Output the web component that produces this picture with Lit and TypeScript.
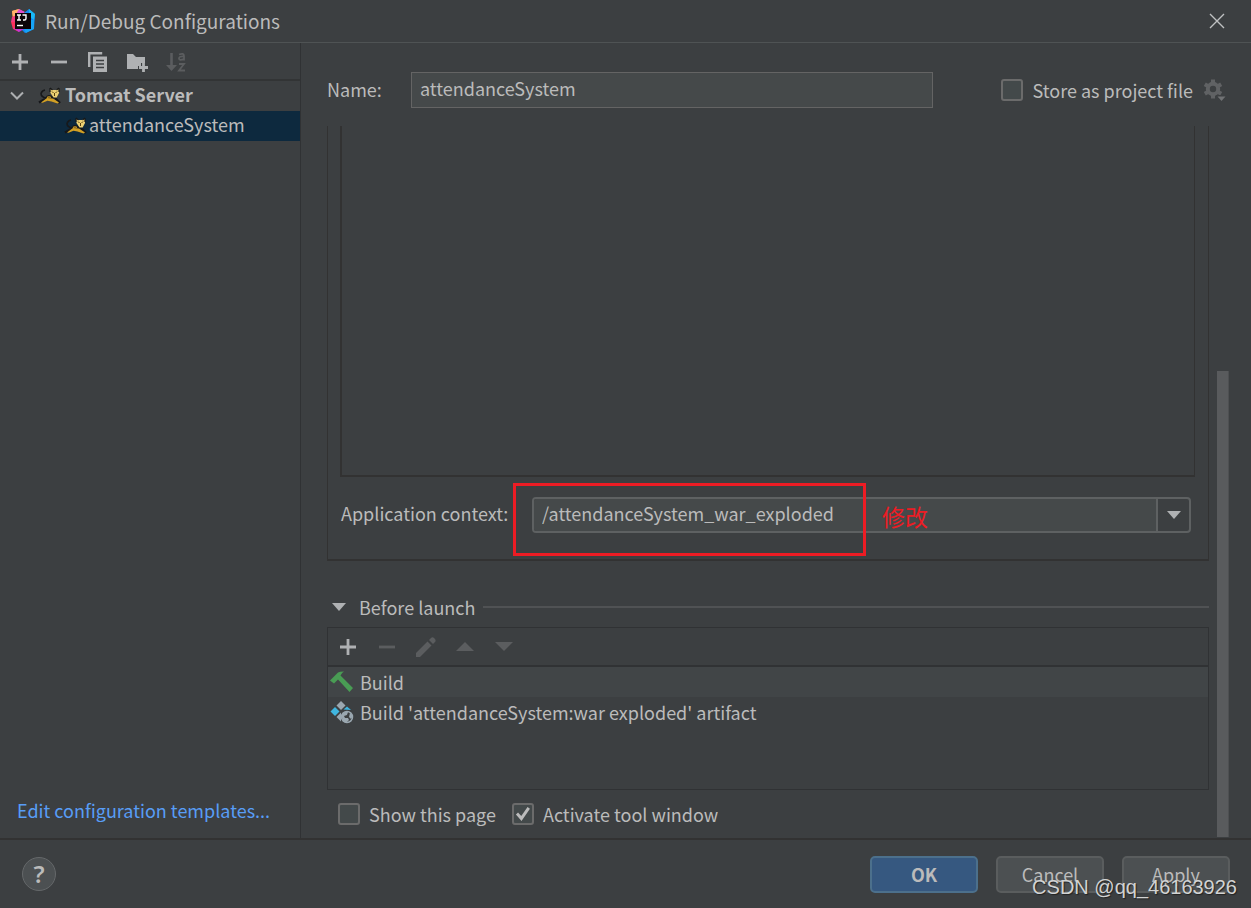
import { LitElement, html, css, svg } from "lit";
import { customElement, property, state } from "lit/decorators.js";
import { classMap } from "lit/directives/class-map.js";

const icons: Record<string, { w: number; h: number; body: unknown }> = {
  logo: {
    w: 26, h: 26,
    body: svg`
      <path d="M2 3 L9 1 L14 4 L9 15 L3 14 Z" fill="#fb8a3c"/>
      <path d="M1 14 L5 10 L9 24 L3 21 Z" fill="#fe315d"/>
      <path d="M2 3 L9 1 L8 6 L3 9 Z" fill="#ffb46b"/>
      <path d="M2 9 L7 7 L6 14 L1 14 Z" fill="#f23a7d"/>
      <path d="M9 1 L15 4 L12 7 L6 6 Z" fill="#e04fd0"/>
      <path d="M14 5 L19 1 L25 6 L24 21 L15 25 L11 21 Z" fill="#1288f5"/>
      <path d="M19 1 L25 6 L24 12 L19 8 Z" fill="#19b9f5"/>
      <path d="M21 12 L24 12 L24 21 L16 25 L14 21 Z" fill="#16a4f7"/>
      <path d="M3 20 L9 24 L14 21 Z" fill="#c436d8"/>
      <rect x="5" y="5" width="16" height="16" fill="#0b0508"/>
      <path d="M7 7h4M9 7v5M7 12h4M12.500 7h3.500v3.500q0 1.500-1.500 1.500h-1.500" fill="none" stroke="#fff" stroke-width="1.400"/>
      <path d="M7 17.500h6" stroke="#fff" stroke-width="1.400"/>`,
  },
  close: { w: 16, h: 16, body: svg`<path d="M1 1 15 15M15 1 1 15" stroke="#bfc1c2" stroke-width="1.4" fill="none"/>` },
  plus: { w: 16, h: 16, body: svg`<path d="M8 0v16M0 8h16" stroke="currentColor" stroke-width="2.800" fill="none"/>` },
  minus: { w: 16, h: 16, body: svg`<path d="M0 8h16" stroke="currentColor" stroke-width="2.800" fill="none"/>` },
  copy: {
    w: 20, h: 20,
    body: svg`<path d="M1.200 15V1.200h13" fill="none" stroke="#afb1b3" stroke-width="2.400"/>
      <path d="M5 4.500h14v15.500H5z" fill="#afb1b3"/>
      <path d="M8 8.500h8M8 12h8M8 15.500h8" stroke="#3c3f41" stroke-width="1.300"/>`,
  },
  folder: {
    w: 22, h: 20,
    body: svg`<path d="M1 2h6l3 3h9v6h-4v3h-3v3H1z" fill="#afb1b3"/>
      <path d="M17.500 11v9M13 15.500h9" stroke="#afb1b3" stroke-width="2.800"/>`,
  },
  sort: {
    w: 20, h: 20,
    body: svg`<path d="M5.500 1v13" stroke="#5b5d5f" stroke-width="2.600"/><path d="M0 13h11l-5.500 6z" fill="#5b5d5f"/>
      <path d="M13 2.500q5-2 5 1.500v4.500M18 4.500q-5-.5-5 2t5 .5" fill="none" stroke="#5b5d5f" stroke-width="1.800"/>
      <path d="M13 12h5l-5 6.500h6" fill="none" stroke="#5b5d5f" stroke-width="1.800"/>`,
  },
  chevron: { w: 14, h: 9, body: svg`<path d="M1 0.500 7 6.500 13 0.500" fill="none" stroke="#adafb1" stroke-width="2"/>` },
  tomcat: {
    w: 22, h: 16,
    body: svg`<path d="M7 10Q2 9 2 5.500Q3 2.500 6 2" fill="none" stroke="#17181a" stroke-width="1.600"/>
      <path d="M6 11 0 14.500M16 10l5 5" stroke="#17181a" stroke-width="2.400"/>
      <path d="M6 10Q8 6 12 7.500l4 2-3 2.500-6 1z" fill="#17181a"/>
      <path d="M2 14.500 8 10l6 .5 6 4-1.500 1-6-2-4-.8-5 2z" fill="#d3a024"/>
      <path d="M8 9.500q2-1.200 4 0" stroke="#d3a024" fill="none" stroke-width="1.400"/>
      <path d="M11 .500 13.500 2h3.500L20 .500V5l-2.300 4.500h-3.200L11.500 5z" fill="#ecd073"/>
      <path d="M11 0v4M20 0v4M11 0l2.500 2M20 0l-2.500 2" stroke="#17181a" stroke-width="1.200"/>
      <path d="M13 3.500l1.500 1.500M18 3.500l-1.500 1.500M15.500 5v3" stroke="#57410e" stroke-width="1"/>`,
  },
  gear: {
    w: 22, h: 22,
    body: svg`<circle cx="9" cy="10" r="5.200" fill="none" stroke="#606264" stroke-width="4"/>
      <path d="M9 .500v4M9 15.500v4M.8 5.300l3.400 2M13.800 12.800l3.400 2M.8 14.700l3.400-2M13.800 7.200l3.400-2" stroke="#606264" stroke-width="4"/>
      <path d="M12 16h10l-5 6z" fill="#3c3f41"/><path d="M13.500 17.500h8l-4 4.500z" fill="#707274"/>`,
  },
  down: { w: 14, h: 8, body: svg`<path d="M0 0h14l-7 8z" fill="#afb1b3"/>` },
  pencil: {
    w: 20, h: 20,
    body: svg`<path d="M0 16 11.500 4.500l4 4L4 20H0z" fill="currentColor"/><path d="M13 3l2-2q1.500-1.500 3.500.500t.500 3.500l-2 2z" fill="currentColor"/>`,
  },
  moveUp: { w: 18, h: 9, body: svg`<path d="M0 9h18L9 0z" fill="currentColor"/>` },
  moveDown: { w: 18, h: 9, body: svg`<path d="M0 0h18L9 9z" fill="currentColor"/>` },
  hammer: {
    w: 24, h: 22,
    body: svg`<path d="M0 9.500 8 1.500Q9.500 .500 14 .500q-2 1-3.500 4L23 17l-3.500 4L8 8.500 4 12.500z" fill="#499c54"/>`,
  },
  artifact: {
    w: 24, h: 24,
    body: svg`<path d="M11 1l4.500 4.500L11 10 6.500 5.500z" fill="#9aa7b0"/><path d="M5 7l4.500 4.500L5 16 .5 11.500z" fill="#40b6e0"/>
      <path d="M13.500 9.500 17 6.500l4 3.500z" fill="#40b6e0"/><path d="M11 12.500v9l-4.500-4.500z" fill="#9aa7b0"/>
      <circle cx="17" cy="17" r="5.500" fill="#3c3f41" stroke="#9aa7b0" stroke-width="1.500"/>
      <path d="M12 14q3-3 6-2l-1 3-3 1 1 2 3 0 1 2-3 3q-5-2-4-9z" fill="#9aa7b0"/>
      <path d="M20 13l3 3-2 3-2-2z" fill="#9aa7b0"/>`,
  },
};

@customElement("ui-icon")
export class UiIcon extends LitElement {
  static styles = css`
    :host { display: inline-flex; flex: none; }
    .glyph { display: block; overflow: visible; }
  `;
  @property() name = "plus";
  render() {
    const i = icons[this.name];
    return html`<svg class="glyph" width=${i.w} height=${i.h} viewBox="0 0 ${i.w} ${i.h}" aria-hidden="true">${i.body}</svg>`;
  }
}

@customElement("app-root")
export class AppRoot extends LitElement {
  static styles = css`
    :host {
      display: flex;
      flex-direction: column;
      min-height: 100vh;
      box-sizing: border-box;
      background: #3c3f41;
      color: #bbbbbb;
      font: 18px/30px "Noto Sans CJK SC", "Noto Sans", sans-serif;
      position: relative;
      overflow: hidden;
    }
    * { box-sizing: border-box; }
    button, input { font: inherit; color: inherit; margin: 0; }
    .plain {
      display: flex; align-items: center; justify-content: center;
      padding: 0; border: 0; background: none; color: #afb1b3;
    }
    .plain:disabled { color: #5b5d5f; }
    .titlebar {
      display: flex; align-items: center; gap: 9px;
      height: 43px; padding: 0 26px 0 10px;
      border-bottom: 1px solid #4f5354;
    }
    .title { flex: 1; margin: 0; font-size: 19px; font-weight: 400; }
    .body { flex: 1; display: flex; }
    .sidebar { width: 301px; display: flex; flex-direction: column; border-right: 1px solid #303234; }
    .tools { display: flex; align-items: center; height: 38px; padding-top: 2px; border-bottom: 2px solid #323435; }
    .tools .plain { width: 39px; height: 34px; }
    .tree { list-style: none; margin: 0; padding: 0; flex: 1; }
    .node { display: flex; align-items: center; height: 30px; gap: 2px; padding-left: 65px; }
    .node.group { font-weight: 700; padding-left: 10px; }
    .node.group .twisty { margin-right: 13px; }
    .node.group .label { padding-left: 2px; }
    .node .label { padding-bottom: 4px; }
    .node.selected { background: #0d293e; }
    .templates { margin: 0 17px 13px; color: #589df6; text-decoration: none; white-space: nowrap; }
    .main { flex: 1; min-width: 0; display: flex; flex-direction: column; padding-left: 26px; }
    .name-row { display: flex; align-items: center; height: 83px; padding: 11px 25px 0 0; }
    .name-label { width: 84px; padding-bottom: 2px; }
    .name-input { width: 522px; height: 36px; padding: 0 8px 4px; border: 1px solid #646464; background: #45494a; outline: 0; }
    .store { margin-left: auto; margin-right: 11px; }
    .check { display: flex; align-items: center; gap: 9px; }
    .check input {
      appearance: none; width: 22px; height: 22px; border: 2px solid #6b6b6b; border-radius: 3px;
      background: #43494a; display: grid; place-items: center;
    }
    .check input:checked::before {
      content: ""; width: 14px; height: 14px; background: #bbbbbb;
      clip-path: polygon(0 54%, 15% 40%, 38% 65%, 83% 0, 100% 12%, 40% 100%);
    }
    .viewport { flex: 1; display: flex; padding-right: 22px; gap: 8px; }
    .content { flex: 1; min-width: 0; display: flex; flex-direction: column; }
    .scroll { width: 12px; display: flex; flex-direction: column; justify-content: flex-end; padding-bottom: 1px; }
    .thumb { height: 466px; background: #595b5d; border-right: 1px solid #4e5052; }
    .deploy {
      flex: 1; display: flex; flex-direction: column;
      padding: 0 13px 26px 12px; border: solid #323232; border-width: 0 1px 2px;
    }
    .artifacts { flex: 1; min-height: 120px; border: solid #323232; border-width: 0 1px 2px 2px; }
    .context { position: relative; display: flex; align-items: center; margin-top: 20px; padding-right: 4px; }
    .context label { width: 192px; padding: 0 0 4px 1px; }
    .combo { flex: 1; display: flex; height: 36px; border: 2px solid #5e6162; border-radius: 4px; overflow: hidden; }
    .combo input { flex: 1; min-width: 0; padding: 0 8px 4px; border: 0; background: #45494a; outline: 0; }
    .combo .plain { width: 33px; border-left: 2px solid #5e6162; }
    .mark { position: absolute; left: 173px; top: -14px; width: 353px; height: 73px; border: 3px solid #ed1c24; pointer-events: none; }
    .note { position: absolute; left: 542px; top: 3px; color: #ed1c24; font: 23px/32px "Noto Sans CJK SC", sans-serif; pointer-events: none; }
    .section { display: flex; align-items: center; gap: 8px; margin-top: 31px; }
    .section .plain { gap: 13px; padding-left: 5px; color: inherit; }
    .rule { flex: 1; height: 2px; background: #505254; }
    .tasks { height: 163px; margin-top: 5px; border: 1px solid #303234; }
    .task-tools { display: flex; height: 39px; border-bottom: 2px solid #303234; }
    .task-tools .plain { width: 39px; height: 37px; }
    .list { list-style: none; margin: 0; padding: 0; }
    .task { display: flex; align-items: center; height: 30px; gap: 6px; padding-left: 2px; }
    .task.alt { background: #414547; }
    .options { display: flex; gap: 16px; padding: 9px 0 9px 11px; }
    .footer { display: flex; align-items: center; gap: 18px; height: 70px; padding: 0 21px 0 22px; border-top: 2px solid #323232; }
    .help {
      width: 34px; height: 34px; margin-right: auto; padding: 0; border: 1px solid #65686a; border-radius: 50%;
      background: #4c5052; font: 600 24px/30px "Noto Sans", sans-serif;
    }
    .btn { width: 108px; height: 37px; padding: 0; border: 2px solid #5a5d5e; border-radius: 5px; background: #4c5052; }
    .btn.primary { background: #365880; border-color: #4c708c; font-weight: 700; }
    .watermark {
      position: absolute; right: 14px; bottom: 6px; pointer-events: none;
      color: #d2d3d3; font: 20px/30px "Liberation Sans", sans-serif; text-shadow: 1px 1px 1px #222;
    }
  `;

  @state() private tasks = [
    { icon: "hammer", label: "Build" },
    { icon: "artifact", label: "Build 'attendanceSystem:war exploded' artifact" },
  ];

  private tool(icon: string, label: string, disabled = false) {
    return html`<button class="plain" aria-label=${label} ?disabled=${disabled}><ui-icon name=${icon}></ui-icon></button>`;
  }

  render() {
    return html`
      <header class="titlebar">
        <ui-icon name="logo"></ui-icon>
        <h1 class="title">Run/Debug Configurations</h1>
        ${this.tool("close", "Close")}
      </header>
      <div class="body">
        <nav class="sidebar">
          <div class="tools">
            ${this.tool("plus", "Add")} ${this.tool("minus", "Remove")} ${this.tool("copy", "Copy")}
            ${this.tool("folder", "New folder")} ${this.tool("sort", "Sort", true)}
          </div>
          <ul class="tree">
            <li class="node group">
              <ui-icon class="twisty" name="chevron"></ui-icon><ui-icon name="tomcat"></ui-icon><span class="label">Tomcat Server</span>
            </li>
            <li class="node selected"><ui-icon name="tomcat"></ui-icon><span class="label">attendanceSystem</span></li>
          </ul>
          <a class="templates" href="#">Edit configuration templates...</a>
        </nav>
        <main class="main">
          <div class="name-row">
            <label class="name-label" for="name">Name:</label>
            <input class="name-input" id="name" type="text" value="attendanceSystem" />
            <label class="check store"><input type="checkbox" />Store as project file</label>
            ${this.tool("gear", "Storage settings")}
          </div>
          <div class="viewport">
            <div class="content">
              <section class="deploy">
                <div class="artifacts"></div>
                <div class="context">
                  <label for="context">Application context:</label>
                  <div class="combo">
                    <input id="context" type="text" value="/attendanceSystem_war_exploded" />
                    ${this.tool("down", "Show options")}
                  </div>
                  <div class="mark"></div>
                  <span class="note">修改</span>
                </div>
              </section>
              <div class="section">
                <button class="plain"><ui-icon name="down"></ui-icon>Before launch</button>
                <div class="rule"></div>
              </div>
              <section class="tasks">
                <div class="task-tools">
                  ${this.tool("plus", "Add task")} ${this.tool("minus", "Remove task", true)} ${this.tool("pencil", "Edit task", true)}
                  ${this.tool("moveUp", "Move up", true)} ${this.tool("moveDown", "Move down", true)}
                </div>
                <ul class="list">
                  ${this.tasks.map((t, i) => html`<li class=${classMap({ task: true, alt: i % 2 === 0 })}><ui-icon name=${t.icon}></ui-icon>${t.label}</li>`)}
                </ul>
              </section>
              <div class="options">
                <label class="check"><input type="checkbox" />Show this page</label>
                <label class="check"><input type="checkbox" checked />Activate tool window</label>
              </div>
            </div>
            <div class="scroll"><div class="thumb"></div></div>
          </div>
        </main>
      </div>
      <footer class="footer">
        <button class="help" aria-label="Help">?</button>
        <button class="btn primary">OK</button>
        <button class="btn">Cancel</button>
        <button class="btn">Apply</button>
      </footer>
      <div class="watermark">CSDN @qq_46163926</div>
    `;
  }
}
